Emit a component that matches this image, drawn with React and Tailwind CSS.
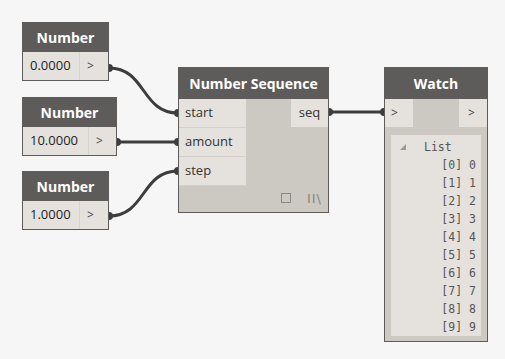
const font = { fontFamily: '"Open Sans", "Noto Sans", sans-serif' };

function NumberNode({ x, y, w, fieldW, value }) {
  return (
    <div
      className="absolute border border-[#5e5c5a] bg-[#ccc9c2]"
      style={{ left: x, top: y, width: w }}
    >
      <div className="h-[29px] bg-[#5e5c5a] flex items-center justify-center text-white font-bold text-[14px]">
        Number
      </div>
      <div className="flex h-[28px]">
        <div
          className="bg-[#e5e2dd] flex items-center pl-[7px] text-[13px] text-[#222] border-r border-[#d8d5cf]"
          style={{ width: fieldW }}
        >
          {value}
        </div>
        <div className="flex-1 bg-[#e5e2dd] flex items-center pl-[7px] text-[12px] text-[#444]">&gt;</div>
      </div>
    </div>
  );
}

function SequenceNode() {
  return (
    <div className="absolute left-[178px] top-[67px] w-[151px] h-[146px] border border-[#5e5c5a] bg-[#ccc9c2] flex flex-col">
      <div className="h-[31px] bg-[#5e5c5a] flex items-center justify-center text-white font-bold text-[14px]">
        Number Sequence
      </div>
      <div className="flex flex-1">
        <div className="w-[67px] flex flex-col">
          {['start', 'amount', 'step'].map((p) => (
            <div
              key={p}
              className="h-[29px] bg-[#e5e2dd] border-b border-[#d3d0ca] flex items-center pl-[6px] text-[13px] text-[#333]"
            >
              {p}
            </div>
          ))}
        </div>
        <div className="flex-1" />
        <div className="w-[37px] h-[28px] bg-[#e5e2dd] flex items-center justify-center text-[13px] text-[#333]">
          seq
        </div>
      </div>
      <div className="h-[26px] flex items-center justify-end gap-[16px] pr-[6px] pb-[2px]">
        <div className="w-[10px] h-[10px] border border-[#8a8784]" />
        <div
          className="text-[13px] leading-[13px] text-[#8a8680] tracking-[1px]"
          style={{ fontFamily: '"DejaVu Sans", sans-serif' }}
        >
          II\
        </div>
      </div>
    </div>
  );
}

function WatchNode() {
  return (
    <div className="absolute left-[384px] top-[67px] w-[104px] h-[275px] border border-[#5e5c5a] bg-[#ccc9c2] flex flex-col">
      <div className="h-[31px] bg-[#5e5c5a] flex items-center justify-center text-white font-bold text-[14px]">
        Watch
      </div>
      <div className="flex justify-between h-[28px]">
        <div className="w-[28px] bg-[#e5e2dd] flex items-center pl-[6px] text-[12px] text-[#444]">&gt;</div>
        <div className="w-[28px] bg-[#e5e2dd] flex items-center pl-[9px] text-[12px] text-[#444]">&gt;</div>
      </div>
      <div
        className="mt-[8px] mx-[6px] h-[201px] bg-[#e5e2dd] pt-[2px] text-[11.5px] text-[#555] leading-[18px]"
        style={{ fontFamily: '"DejaVu Sans Mono", "Liberation Mono", monospace' }}
      >
        <div className="flex items-center h-[19px]">
          <span className="ml-[9px] w-0 h-0 border-l-[6px] border-l-transparent border-b-[6px] border-b-[#999]" />
          <span className="ml-[18px]">List</span>
        </div>
        {Array.from({ length: 10 }, (_, i) => (
          <div key={i} className="flex justify-end pr-[5px] h-[18px]">
            [{i}] {i}
          </div>
        ))}
      </div>
    </div>
  );
}

export default function App() {
  return (
    <div className="relative w-[505px] h-[359px] bg-[#f6f6f6] overflow-hidden" style={font}>
      <svg className="absolute inset-0" width="505" height="359">
        <g stroke="#3d3d3d" strokeWidth="3" fill="none">
          <path d="M109,68 C146,68 141,113 178,113" />
          <path d="M117,142 L178,142" />
          <path d="M109,216 C146,216 141,171 178,171" />
          <path d="M329,112 L384,112" />
        </g>
        <g fill="#3d3d3d">
          <circle cx="109" cy="68" r="4" />
          <circle cx="178" cy="113" r="4" />
          <circle cx="117" cy="142" r="4" />
          <circle cx="178" cy="142" r="4" />
          <circle cx="109" cy="216" r="4" />
          <circle cx="178" cy="171" r="4" />
          <circle cx="329" cy="112" r="4" />
          <circle cx="384" cy="112" r="4" />
        </g>
      </svg>
      <NumberNode x={22} y={22} w={87} fieldW={57} value="0.0000" />
      <NumberNode x={22} y={97} w={95} fieldW={66} value="10.0000" />
      <NumberNode x={22} y={171} w={87} fieldW={57} value="1.0000" />
      <SequenceNode />
      <WatchNode />
    </div>
  );
}
